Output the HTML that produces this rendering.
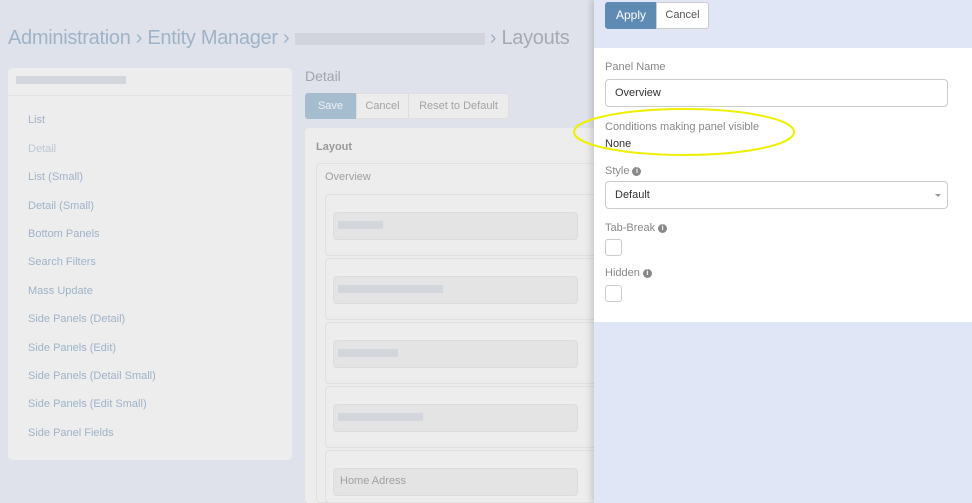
<!DOCTYPE html>
<html style="width:972px;height:503px;overflow:hidden"><head><style>
*{box-sizing:border-box;margin:0;padding:0}
body{width:972px;height:503px;overflow:hidden;background:#dfe2ea;font-family:"Liberation Sans",sans-serif;position:relative;font-size:12px}
.a{position:absolute}
.crumb{left:8px;top:27px;font-size:20px;color:#9fb3c8;letter-spacing:-0.3px}
.blur{background:#d3d6dd;display:inline-block;height:12px;vertical-align:middle}
.lp{left:8px;top:68px;width:284px;height:392px;background:#ededed;border-radius:4px}
.lp .h{height:28px;border-bottom:1px solid #e2e2e2}
.lp .it{position:absolute;left:20px;color:#9fb3c8;font-size:11px}
.btn{position:absolute;height:26px;border:1px solid #dedede;background:#ececec;color:#a4a4a4;font-size:11px;line-height:24px;text-align:center}
.card{left:305px;top:128px;width:300px;height:375px;background:#ededed;border-radius:4px}
.row{position:absolute;left:325px;width:280px;height:62px;border:1px solid #e0e0e0;border-radius:4px;background:#ededed}
.fld{position:absolute;left:333px;width:245px;height:28px;background:#e4e4e4;border:1px solid #dcdcdc;border-radius:4px}
.modal{left:594px;top:0;width:378px;height:503px;background:#e1e6f7;box-shadow:-3px 0 6px rgba(0,0,0,.15)}
.mb{left:594px;top:48px;width:378px;height:274px;background:#fff}
.lbl{position:absolute;left:605px;color:#888;font-size:11px}
.inp{position:absolute;left:605px;width:343px;height:28px;border:1px solid #ccc;border-radius:4px;font-size:11px;color:#333;padding-left:9px;line-height:26px}
.cb{position:absolute;left:605px;width:17px;height:17px;border:1px solid #ccc;border-radius:3px}
.i{display:inline-block;width:9px;height:9px;border-radius:50%;background:#888;color:#fff;font-size:7px;line-height:9px;text-align:center;font-weight:bold;vertical-align:1px;margin-left:3px}
</style></head><body>
<div class="a crumb">Administration › Entity Manager › <span class="blur" style="width:190px;background:#d1d4dc"></span> › <span style="color:#a5aab5">Layouts</span></div>
<div class="a lp"><div class="h"><span class="blur a" style="left:8px;top:8px;width:110px;height:8px"></span></div>
<div class="it" style="top:46px">List</div>
<div class="it" style="top:75px;color:#bcc8d4">Detail</div>
<div class="it" style="top:103px">List (Small)</div>
<div class="it" style="top:132px">Detail (Small)</div>
<div class="it" style="top:160px">Bottom Panels</div>
<div class="it" style="top:188px">Search Filters</div>
<div class="it" style="top:217px">Mass Update</div>
<div class="it" style="top:245px">Side Panels (Detail)</div>
<div class="it" style="top:274px">Side Panels (Edit)</div>
<div class="it" style="top:302px">Side Panels (Detail Small)</div>
<div class="it" style="top:330px">Side Panels (Edit Small)</div>
<div class="it" style="top:359px">Side Panel Fields</div>
</div>
<div class="a" style="left:305px;top:68px;font-size:14px;color:#a0a4ab">Detail</div>
<div class="btn" style="left:305px;top:93px;width:51px;background:#a6bccf;color:#eef2f6;border-color:#a6bccf;border-radius:3px 0 0 3px">Save</div>
<div class="btn" style="left:356px;top:93px;width:53px">Cancel</div>
<div class="btn" style="left:408px;top:93px;width:101px;border-radius:0 3px 3px 0">Reset to Default</div>
<div class="a card"></div>
<div class="a" style="left:316px;top:141px;font-size:11px;color:#999;font-weight:bold">Layout</div>
<div class="a" style="left:316px;top:163px;width:290px;height:340px;border:1px solid #e0e0e0;border-radius:4px"></div>
<div class="a" style="left:325px;top:171px;font-size:11px;color:#a0a0a0">Overview</div>
<div class="row" style="top:194px"></div><div class="fld" style="top:212px"><span class="blur a" style="left:4px;top:8px;width:45px;height:8px"></span></div>
<div class="row" style="top:258px"></div><div class="fld" style="top:276px"><span class="blur a" style="left:4px;top:8px;width:105px;height:8px"></span></div>
<div class="row" style="top:322px"></div><div class="fld" style="top:340px"><span class="blur a" style="left:4px;top:8px;width:60px;height:8px"></span></div>
<div class="row" style="top:386px"></div><div class="fld" style="top:404px"><span class="blur a" style="left:4px;top:8px;width:85px;height:8px"></span></div>
<div class="row" style="top:450px;height:53px"></div><div class="fld" style="top:468px;color:#a0a0a0;font-size:11px;padding:6px 6px">Home Adress</div>
<div class="a modal"></div>
<div class="a mb"></div>
<div class="btn" style="left:605px;top:2px;width:52px;height:27px;line-height:25px;background:#5e8ab3;color:#fff;border-color:#5e8ab3;border-radius:3px 0 0 3px;font-size:12px">Apply</div>
<div class="btn" style="left:656px;top:2px;width:53px;height:27px;line-height:25px;background:#fff;color:#555;border-color:#ccc;border-radius:0 3px 3px 0">Cancel</div>
<div class="lbl" style="top:61px">Panel Name</div>
<div class="inp" style="top:79px">Overview</div>
<div class="lbl" style="top:121px">Conditions making panel visible</div>
<div class="a" style="left:605px;top:138px;font-size:11px;color:#333">None</div>
<svg class="a" style="left:572px;top:106px" width="230" height="56"><ellipse cx="112" cy="26" rx="110" ry="23" fill="none" stroke="#eef000" stroke-width="2"/></svg>
<div class="lbl" style="top:165px">Style<span class="i">i</span></div>
<div class="inp" style="top:181px">Default<span class="a" style="right:6px;top:12px;border:3px solid transparent;border-top-color:#999;border-bottom:0"></span></div>
<div class="lbl" style="top:222px">Tab-Break<span class="i">i</span></div>
<div class="cb" style="top:239px"></div>
<div class="lbl" style="top:267px">Hidden<span class="i">i</span></div>
<div class="cb" style="top:285px"></div>
</body></html>
